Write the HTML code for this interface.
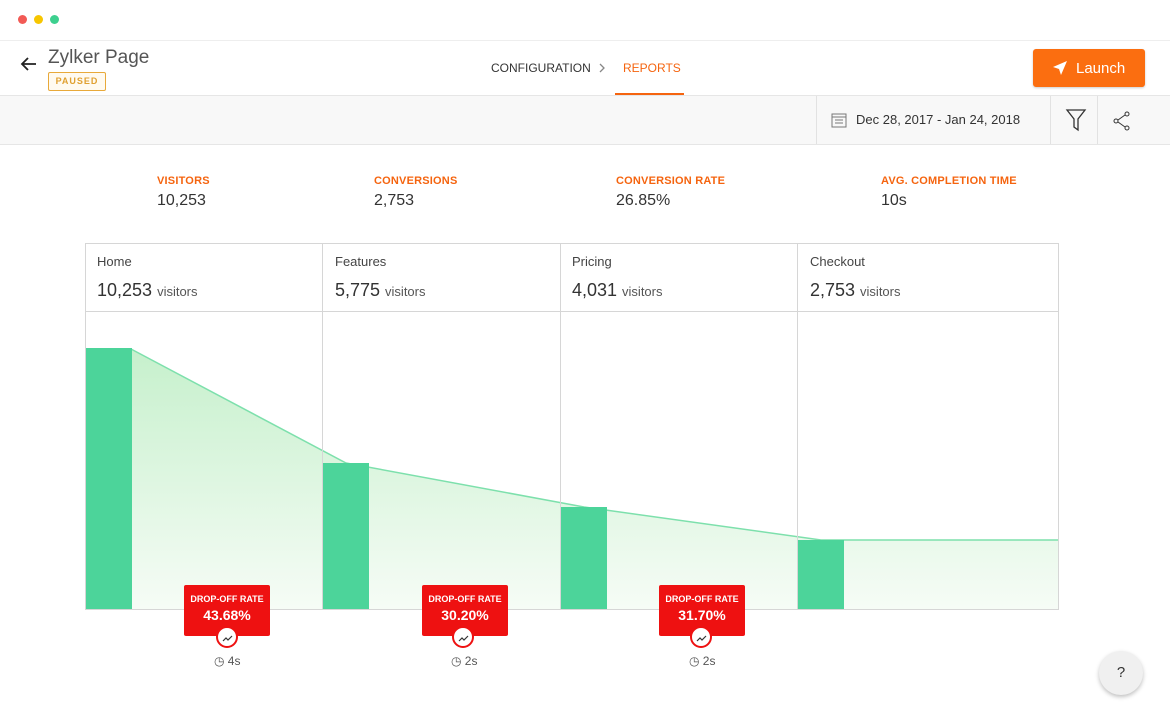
<!DOCTYPE html>
<html><head><style>
*{margin:0;padding:0;box-sizing:border-box}
body{width:1170px;height:719px;background:#fff;font-family:"Liberation Sans",sans-serif;position:relative;overflow:hidden;color:#333}
.a{position:absolute}
.dot{width:9px;height:9px;border-radius:50%;top:15px}
.lbl{font-size:11px;color:#f5640f;font-weight:bold;letter-spacing:.2px}
.val{font-size:16px;color:#333}
.col{font-size:13px;color:#444}
.num{font-size:18px;color:#333}
.num span{font-size:13px;color:#555}
.drop{background:#ee1111;color:#fff;text-align:center;width:86px;height:51px;border-radius:2px}
.drop b{display:block;font-size:9px;margin-top:9px}
.drop i{display:block;font-style:normal;font-weight:bold;font-size:14px;margin-top:3px}
.circ{width:22px;height:22px;border-radius:50%;background:#fff;border:2px solid #ee1111}
.t{font-size:12px;color:#555}
</style></head><body>
<div class="a dot" style="left:18px;background:#f25a55"></div>
<div class="a dot" style="left:34px;background:#f7c600"></div>
<div class="a dot" style="left:50px;background:#3dd08f"></div>
<div class="a" style="left:0;top:40px;width:1170px;height:1px;background:#eee"></div>
<svg class="a" style="left:20px;top:56px" width="18" height="16"><path d="M16 8H3M8 2L2 8l6 6" stroke="#222" stroke-width="1.8" fill="none"/></svg>
<div class="a" style="left:48px;top:47px;font-size:19px;color:#555">Zylker Page</div>
<div class="a" style="left:48px;top:72px;width:58px;height:19px;border:1px solid #e8a93a;border-radius:2px;background:#fffaf0;color:#e0a030;font-size:9px;font-weight:bold;letter-spacing:1px;text-align:center;line-height:17px">PAUSED</div>
<div class="a" style="left:491px;top:61px;font-size:12px;color:#333">CONFIGURATION</div>
<svg class="a" style="left:598px;top:62px" width="8" height="12"><path d="M2 2l4 4-4 4" stroke="#888" stroke-width="1.3" fill="none"/></svg>
<div class="a" style="left:623px;top:61px;font-size:12px;color:#f5640f">REPORTS</div>
<div class="a" style="left:615px;top:93px;width:69px;height:3px;background:#f5640f"></div>
<div class="a" style="left:1033px;top:49px;width:112px;height:38px;background:#fb6e10;border-radius:3px;box-shadow:0 1px 2px rgba(0,0,0,.2)"></div>
<div class="a" style="left:1076px;top:60px;color:#fff;font-size:15px;line-height:17px">Launch</div>
<svg class="a" style="left:1052px;top:60px" width="16" height="16"><path d="M15 1L1 7l6 2 2 6z" fill="#fff"/></svg>
<div class="a" style="left:0;top:95px;width:1170px;height:50px;background:#f8f8f8;border-top:1px solid #e6e6e6;border-bottom:1px solid #e6e6e6"></div>
<div class="a" style="left:816px;top:96px;width:1px;height:48px;background:#e2e2e2"></div>
<div class="a" style="left:1050px;top:96px;width:1px;height:48px;background:#e2e2e2"></div>
<div class="a" style="left:1097px;top:96px;width:1px;height:48px;background:#e2e2e2"></div>
<svg class="a" style="left:831px;top:112px" width="16" height="16"><rect x="1" y="2" width="14" height="13" fill="none" stroke="#777"/><path d="M1 5h14M4 8h8M4 11h8" stroke="#777"/></svg>
<div class="a" style="left:856px;top:112px;font-size:13px;color:#333">Dec 28, 2017 - Jan 24, 2018</div>
<svg class="a" style="left:1065px;top:108px" width="22" height="24"><path d="M2 2h18l-7 9v11l-4-3v-8z" fill="none" stroke="#333" stroke-width="1.3"/></svg>
<svg class="a" style="left:1112px;top:111px" width="20" height="20"><circle cx="15" cy="3" r="2" fill="none" stroke="#333"/><circle cx="4" cy="10" r="2" fill="none" stroke="#333"/><circle cx="15" cy="17" r="2" fill="none" stroke="#333"/><path d="M6 9l7-5M6 11l7 5" stroke="#333"/></svg>

<div class="a lbl" style="left:157px;top:175px">VISITORS</div><div class="a val" style="left:157px;top:192px">10,253</div>
<div class="a lbl" style="left:374px;top:175px">CONVERSIONS</div><div class="a val" style="left:374px;top:192px">2,753</div>
<div class="a lbl" style="left:616px;top:175px">CONVERSION RATE</div><div class="a val" style="left:616px;top:192px">26.85%</div>
<div class="a lbl" style="left:881px;top:175px">AVG. COMPLETION TIME</div><div class="a val" style="left:881px;top:192px">10s</div>

<svg class="a" style="left:0;top:0" width="1170" height="719">
<defs><linearGradient id="g" x1="0" y1="0" x2="0" y2="1"><stop offset="0" stop-color="#c6f0cc"/><stop offset="1" stop-color="#f6fcf6"/></linearGradient></defs>
<rect x="85.5" y="243.5" width="973" height="366" fill="#fff" stroke="#d6d6d6"/>
<path d="M131 349L346 463L584 507L821 540L1058 540L1058 609L85 609L85 349z" fill="url(#g)"/>
<path d="M131 349L346 463L584 507L821 540L1058 540" stroke="#7de0ac" stroke-width="1.5" fill="none"/>
<path d="M85 311.5h973M322.5 243v366M560.5 243v366M797.5 243v366M85.5 243v366M1058.5 243v366" stroke="#d6d6d6"/>
<rect x="86" y="348" width="46" height="261" fill="#4cd49a"/>
<rect x="323" y="463" width="46" height="146" fill="#4cd49a"/>
<rect x="561" y="507" width="46" height="102" fill="#4cd49a"/>
<rect x="798" y="540" width="46" height="69" fill="#4cd49a"/>
</svg>
<div class="a col" style="left:97px;top:254px">Home</div><div class="a num" style="left:97px;top:280px">10,253 <span>visitors</span></div>
<div class="a col" style="left:335px;top:254px">Features</div><div class="a num" style="left:335px;top:280px">5,775 <span>visitors</span></div>
<div class="a col" style="left:572px;top:254px">Pricing</div><div class="a num" style="left:572px;top:280px">4,031 <span>visitors</span></div>
<div class="a col" style="left:810px;top:254px">Checkout</div><div class="a num" style="left:810px;top:280px">2,753 <span>visitors</span></div>

<div class="a drop" style="left:184px;top:585px"><b>DROP-OFF RATE</b><i>43.68%</i></div>
<div class="a drop" style="left:422px;top:585px"><b>DROP-OFF RATE</b><i>30.20%</i></div>
<div class="a drop" style="left:659px;top:585px"><b>DROP-OFF RATE</b><i>31.70%</i></div>
<div class="a circ" style="left:216px;top:626px"></div>
<div class="a circ" style="left:452px;top:626px"></div>
<div class="a circ" style="left:690px;top:626px"></div>
<svg class="a" style="left:0;top:0" width="1170" height="719"><g stroke="#333" stroke-width="1.2" fill="none"><path d="M223 641l3-3 2 2 4-4"/><path d="M459 641l3-3 2 2 4-4"/><path d="M697 641l3-3 2 2 4-4"/></g></svg>
<div class="a t" style="left:214px;top:654px">◷ 4s</div>
<div class="a t" style="left:451px;top:654px">◷ 2s</div>
<div class="a t" style="left:689px;top:654px">◷ 2s</div>

<div class="a" style="left:1099px;top:651px;width:44px;height:44px;border-radius:50%;background:#f0f0f0;box-shadow:0 2px 4px rgba(0,0,0,.25);text-align:center;line-height:44px;font-size:15px;color:#333">?</div>
</body></html>
